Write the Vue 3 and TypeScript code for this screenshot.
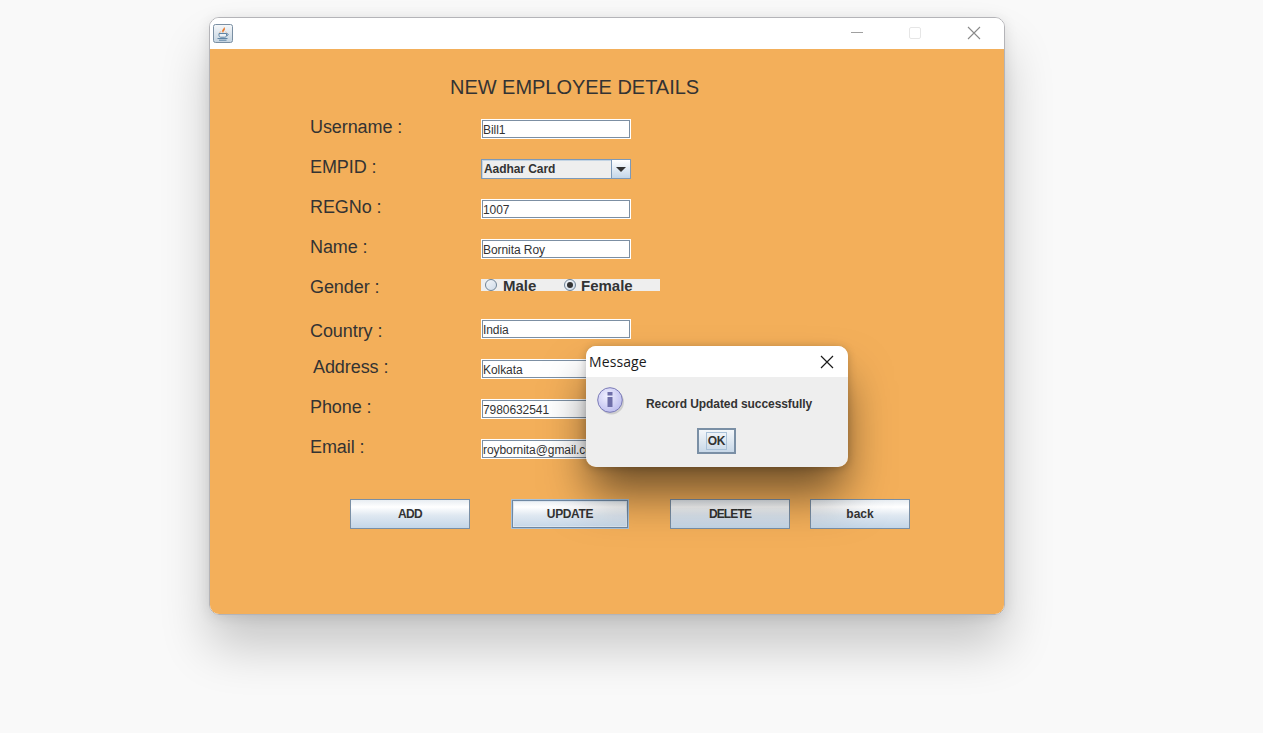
<template>
  <div class="desktop">
    <div class="window">
      <header class="titlebar">
        <span class="app-icon">
          <svg width="20" height="19" viewBox="0 0 20 19">
            <defs>
              <linearGradient id="iconbg" x1="0" y1="0" x2="0" y2="1">
                <stop offset="0" stop-color="#f6f8fa" />
                <stop offset="1" stop-color="#c4d3e0" />
              </linearGradient>
            </defs>
            <rect x="0.5" y="0.5" width="19" height="18" rx="2" fill="url(#iconbg)" stroke="#7a8fa3" />
            <path d="M10.8 2.5c1.2 2-2.6 3-1.4 5.4.3.6.9.9.9.9-.5-1.5 2.6-2.6 1.4-4.8-.2-.5-.5-1-.9-1.5z" fill="#ec7a2a" />
            <path d="M6.5 8.5c-.6 0 1.1-.7 1.7-.8M12.5 7.8c.6.1 1 .4 1 .7" fill="none" stroke="#e8a06a" stroke-width="0.8" />
            <path d="M6 9.5h7.5v1.8c0 1.2-.9 1.9-1.8 1.9H7.8c-.9 0-1.8-.7-1.8-1.9z" fill="#eef2f6" stroke="#5f84a5" />
            <path d="M13.5 9.8h1.1c.9 0 .9 1.9-1.1 2" fill="none" stroke="#5f84a5" />
            <path d="M4.5 14.5h10M6 16.2h7.5" stroke="#5f84a5" fill="none" />
          </svg>
        </span>
        <div class="window-controls">
          <svg width="12" height="12" viewBox="0 0 12 12">
            <path d="M0 5.5h12" stroke="#a0a0a0" />
          </svg>
          <svg width="12" height="12" viewBox="0 0 12 12">
            <rect x="0.5" y="0.5" width="11" height="11" rx="1.5" fill="none" stroke="#e6e6e6" />
          </svg>
          <svg width="14" height="14" viewBox="0 0 14 14">
            <path d="M1 1l12 12M13 1L1 13" stroke="#8a8a8a" stroke-width="1.1" fill="none" />
          </svg>
        </div>
      </header>

      <main class="content">
        <h1 class="heading">NEW EMPLOYEE DETAILS</h1>

        <div class="form">
          <template v-for="row in rows" :key="row.label">
            <label class="field-label" :class="row.labelClass">{{ row.label }}</label>
            <div class="field">
              <div v-if="row.kind === 'input'" class="text-input">{{ row.value }}</div>
              <div v-else-if="row.kind === 'select'" class="select">
                <span class="select-value">{{ row.value }}</span>
                <span class="select-arrow"><i></i></span>
              </div>
              <div v-else class="radios">
                <span class="radio radio-male"><i class="dot"></i>Male</span>
                <span class="radio radio-female"><i class="dot on"></i>Female</span>
              </div>
            </div>
          </template>
        </div>

        <div class="actions">
          <button class="btn btn-add">ADD</button>
          <button class="btn btn-update">UPDATE</button>
          <button class="btn btn-delete">DELETE</button>
          <button class="btn btn-back">back</button>
        </div>
      </main>
    </div>

    <div class="dialog-shadow"></div>
    <div class="dialog">
      <header class="dialog-title">
        <span>Message</span>
        <svg width="14" height="14" viewBox="0 0 14 14">
          <path d="M1 1l12 12M13 1L1 13" stroke="#1a1a1a" stroke-width="1.2" fill="none" />
        </svg>
      </header>
      <div class="dialog-body">
        <div class="dialog-msg">
          <svg class="info" width="29" height="29" viewBox="0 0 29 29">
            <defs>
              <radialGradient id="infobg" cx="0.4" cy="0.35" r="0.7">
                <stop offset="0" stop-color="#f0f0ff" />
                <stop offset="1" stop-color="#bcbcee" />
              </radialGradient>
            </defs>
            <circle cx="14.5" cy="15" r="12.5" fill="#00000022" />
            <circle cx="13" cy="13" r="12.3" fill="url(#infobg)" stroke="#7a7ab5" />
            <rect x="10.5" y="10" width="5" height="10" fill="#6e6ea8" />
            <rect x="10.5" y="5" width="5" height="3.5" fill="#6e6ea8" />
          </svg>
          <span class="msg-text">Record Updated successfully</span>
        </div>
        <button class="ok"><span>OK</span></button>
      </div>
    </div>
  </div>
</template>

<script setup lang="ts">
interface Row {
  label: string
  kind: 'input' | 'select' | 'radio'
  value?: string
  labelClass?: string
}

const rows: Row[] = [
  { label: 'Username :', kind: 'input', value: 'Bill1' },
  { label: 'EMPID :', kind: 'select', value: 'Aadhar Card' },
  { label: 'REGNo :', kind: 'input', value: '1007' },
  { label: 'Name :', kind: 'input', value: 'Bornita Roy' },
  { label: 'Gender :', kind: 'radio' },
  { label: 'Country :', kind: 'input', value: 'India', labelClass: 'lower' },
  { label: 'Address :', kind: 'input', value: 'Kolkata', labelClass: 'indent' },
  { label: 'Phone :', kind: 'input', value: '7980632541' },
  { label: 'Email :', kind: 'input', value: 'roybornita@gmail.com' },
]
</script>

<style>
html,
body {
  margin: 0;
  background: #f9f9f9;
}
</style>

<style scoped>
.desktop {
  position: relative;
  width: 1263px;
  height: 733px;
  overflow: hidden;
  background: #f9f9f9;
  font-family: "Liberation Sans", Arial, sans-serif;
  color: #333;
}

.desktop::before {
  content: "";
  position: absolute;
  left: 209px;
  top: 17px;
  width: 796px;
  height: 598px;
  border-radius: 10px;
  box-shadow: 0 32px 50px rgba(0, 0, 0, 0.2), 0 2px 14px rgba(0, 0, 0, 0.1);
}

.window {
  position: absolute;
  left: 209px;
  top: 17px;
  width: 796px;
  height: 598px;
  box-sizing: border-box;
  border: 1px solid #b4b4b8;
  border-radius: 10px;
  overflow: hidden;
  background: #fff;
  display: flex;
  flex-direction: column;
}

.titlebar {
  height: 31px;
  flex: none;
  background: #fff;
  display: flex;
  align-items: center;
  justify-content: space-between;
  padding: 0 23px 2px 3px;
  box-sizing: border-box;
}

.app-icon {
  display: flex;
  margin-top: 2px;
}

.window-controls {
  display: flex;
  align-items: center;
  gap: 46px;
}

.content {
  flex: 1;
  display: flex;
  flex-direction: column;
  background: #f3af5a;
}

.heading {
  margin: 26px 0 0 240px;
  font-size: 20px;
  font-weight: 400;
  line-height: 24px;
  letter-spacing: -0.03px;
  color: #333;
}

.form {
  display: grid;
  grid-template-columns: 171px 180px;
  grid-auto-rows: 40px;
  margin: 18px 0 0 100px;
}

.field-label {
  font-size: 18px;
  line-height: 21px;
  letter-spacing: -0.08px;
  color: #333;
}

.field-label.lower {
  padding-top: 4px;
}

.field-label.indent {
  padding-left: 3px;
}

.field {
  padding-top: 2px;
}

.text-input {
  box-sizing: border-box;
  width: 150px;
  height: 20px;
  background: #fff;
  border: 1px solid #fff;
  box-shadow: inset 1px 1px 0 #7c8fa3, inset -1px -1px 0 #7c8fa3;
  padding: 3px 1px 0;
  font-size: 12px;
  line-height: 15px;
  letter-spacing: -0.07px;
  color: #333;
  white-space: nowrap;
  overflow: hidden;
}

.select {
  box-sizing: border-box;
  width: 150px;
  height: 20px;
  display: flex;
  border: 1px solid #7c99b8;
  background: #eeeeee;
  box-shadow: inset 1px 1px 0 #c3d4e4;
}

.select-value {
  flex: 1;
  padding: 1px 0 0 2px;
  font-size: 12px;
  font-weight: 700;
  line-height: 17px;
  letter-spacing: -0.07px;
  color: #333;
}

.select-arrow {
  width: 18px;
  border-left: 1px solid #7c99b8;
  background: linear-gradient(#fff, #c4d6e8);
  display: flex;
  align-items: center;
  justify-content: center;
}

.select-arrow i {
  width: 0;
  height: 0;
  border-left: 5px solid transparent;
  border-right: 5px solid transparent;
  border-top: 5px solid #333;
}

.radios {
  display: flex;
  align-items: center;
  width: 179px;
  height: 12px;
  background: #eeeeee;
  font-size: 15px;
  font-weight: 700;
  color: #333;
}

.radio {
  display: flex;
  align-items: center;
  gap: 6px;
  line-height: 12px;
  padding-top: 1px;
}

.radio-male {
  width: 79px;
  margin-left: 4px;
}

.radio-female {
  gap: 5px;
}

.dot {
  box-sizing: border-box;
  width: 12px;
  height: 12px;
  margin-top: -2px;
  border-radius: 50%;
  border: 1px solid #6f8396;
  background: linear-gradient(135deg, #f4f6f9, #cfdbe8);
  position: relative;
}

.dot.on::after {
  content: "";
  position: absolute;
  left: 2px;
  top: 2px;
  width: 6px;
  height: 6px;
  border-radius: 50%;
  background: #333;
}

.actions {
  display: flex;
  margin: 22px 0 0 140px;
}

.btn {
  box-sizing: border-box;
  height: 30px;
  padding: 0;
  border: 1px solid #7a8fa5;
  font-family: "Liberation Sans", Arial, sans-serif;
  font-size: 12px;
  font-weight: 700;
  color: #333;
  background: linear-gradient(#e8edf2 0%, #ffffff 25%, #dfe8f1 55%, #c4d6e8 100%);
}

.btn-add {
  width: 120px;
  letter-spacing: -0.7px;
}

.btn-update {
  width: 118px;
  margin-left: 41px;
  letter-spacing: -0.35px;
  border-color: #a8c2da;
  box-shadow: inset 0 0 0 1px #6f88a3, inset 0 0 0 2px #dde6ef;
}

.btn-delete {
  width: 120px;
  margin-left: 41px;
  letter-spacing: -0.85px;
}

.btn-back {
  width: 100px;
  margin-left: 20px;
}

.dialog-shadow {
  position: absolute;
  left: 586px;
  top: 346px;
  width: 262px;
  height: 121px;
  border-radius: 10px;
  box-shadow: 0 30px 46px -4px rgba(0, 0, 0, 0.55), 0 1px 8px rgba(0, 0, 0, 0.22);
}

.dialog {
  position: absolute;
  left: 586px;
  top: 346px;
  width: 262px;
  height: 121px;
  border-radius: 10px;
  overflow: hidden;
  background: #eeeeee;
}

.dialog-title {
  height: 31px;
  background: #fff;
  display: flex;
  align-items: center;
  justify-content: space-between;
  padding: 0 14px 0 3px;
  font-size: 14px;
  letter-spacing: 0.1px;
  font-family: "Open Sans", "Liberation Sans", sans-serif;
  color: #1a1a1a;
}

.dialog-body {
  display: flex;
  flex-direction: column;
  align-items: center;
}

.dialog-msg {
  align-self: stretch;
  display: flex;
  align-items: flex-start;
  padding: 10px 0 0 11px;
  height: 41px;
}

.msg-text {
  margin: 10px 0 0 20px;
  font-size: 12px;
  font-weight: 700;
  line-height: 15px;
  letter-spacing: -0.07px;
  color: #333;
}

.ok {
  box-sizing: border-box;
  width: 39px;
  height: 26px;
  padding: 0;
  margin-right: 1px;
  border: 2px solid #7a8fa5;
  background: linear-gradient(#f4f7fa, #c8d8e8);
  display: flex;
  align-items: center;
  justify-content: center;
  font-family: "Liberation Sans", Arial, sans-serif;
  font-size: 12px;
  font-weight: 700;
  letter-spacing: -0.2px;
  color: #333;
}

.ok span {
  padding: 0 1px;
  line-height: 16px;
  outline: 1px solid #a9c1d8;
}
</style>
